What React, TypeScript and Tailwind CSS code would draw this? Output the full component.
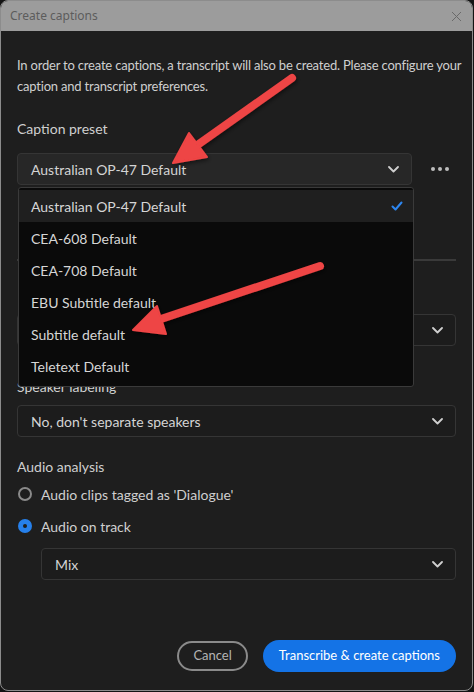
import * as React from "react";

const font = { fontFamily: "Lato, 'Noto Sans', sans-serif" };

function Chevron() {
	return (
		<svg width="11" height="7" viewBox="0 0 11 7" fill="none" className="shrink-0">
			<path d="M1 1l4.5 4.5L10 1" stroke="#cfcfcf" strokeWidth="1.8" strokeLinecap="round" strokeLinejoin="round" />
		</svg>
	);
}

function Select({ value, className = "" }: { value: string; className?: string }) {
	return (
		<div
			className={`flex items-center justify-between h-[32px] pl-[13px] pr-[12px] rounded-[4px] border border-[#353535] bg-[#1c1c1c] text-[14px] text-[#d4d4d4] ${className}`}
		>
			<span>{value}</span>
			<Chevron />
		</div>
	);
}

const presets = [
	"Australian OP-47 Default",
	"CEA-608 Default",
	"CEA-708 Default",
	"EBU Subtitle default",
	"Subtitle default",
	"Teletext Default",
];

function Arrows() {
	return (
		<svg className="absolute inset-0 z-20 pointer-events-none" width="474" height="692" viewBox="0 0 474 692">
			<defs>
				<filter id="sh" x="-20%" y="-20%" width="140%" height="140%">
					<feDropShadow dx="1" dy="2" stdDeviation="2" floodColor="#000" floodOpacity="0.5" />
				</filter>
			</defs>
			<g filter="url(#sh)" fill="#ee4444" stroke="#ee4444">
				<line x1="292" y1="78" x2="196" y2="146" strokeWidth="8" strokeLinecap="round" />
				<polygon points="173,163 189,133 207,157" strokeWidth="2" strokeLinejoin="round" />
				<line x1="320" y1="266" x2="158" y2="320" strokeWidth="8" strokeLinecap="round" />
				<polygon points="133,330 157,306 166,334" strokeWidth="2" strokeLinejoin="round" />
			</g>
		</svg>
	);
}

export default function App() {
	return (
		<div className="relative w-[474px] h-[692px] bg-[#141414] overflow-hidden" style={font}>
			<div className="flex flex-col w-[473px] h-[691px] rounded-[8px] overflow-hidden border border-[#8c8c8c] bg-[#1e1e1e]">
				<div className="flex items-center justify-between h-[30px] shrink-0 bg-[#9c9c9c] pl-[9px] pr-[10px]">
					<span className="text-[12px] text-[#5c5c5c]" style={{ fontFamily: "'Noto Sans', sans-serif" }}>
						Create captions
					</span>
					<svg width="11" height="11" viewBox="0 0 11 11">
						<path d="M1 1l9 9M10 1l-9 9" stroke="#6a6a6a" strokeWidth="1" />
					</svg>
				</div>

				<div className="flex flex-col flex-1 px-4 pt-[24px] text-[#cfcfcf]">
					<p className="text-[13px] leading-[21px] tracking-[-0.2px] whitespace-nowrap">
						In order to create captions, a transcript will also be created. Please configure your
						<br />
						caption and transcript preferences.
					</p>

					<div className="mt-[22px] text-[14px] leading-[20px]">Caption preset</div>

					<div className="relative flex items-center mt-[14px]">
						<Select value="Australian OP-47 Default" className="flex-1 bg-[#272727] border-[#3b3b3b]" />
						<div className="flex items-center justify-center w-[32px] ml-[12px] gap-[3px]">
							<span className="w-[4px] h-[4px] rounded-full bg-[#bdbdbd]" />
							<span className="w-[4px] h-[4px] rounded-full bg-[#bdbdbd]" />
							<span className="w-[4px] h-[4px] rounded-full bg-[#bdbdbd]" />
						</div>

						<div className="absolute left-[1px] top-[34px] w-[396px] z-10 pt-[2px] pb-[4px] rounded-[3px] border border-[#3a3a3a] bg-[#0a0a0a]">
							{presets.map((p, i) => (
								<div
									key={p}
									className={`flex items-center justify-between h-[32px] pl-[12px] pr-[10px] text-[14px] text-[#d6d6d6] ${
										i === 0 ? "bg-[#1f1f1f]" : ""
									}`}
								>
									<span>{p}</span>
									{i === 0 && (
										<svg width="12" height="10" viewBox="0 0 12 10" fill="none">
											<path d="M1.5 5.5l3 3L10.5 1.5" stroke="#2d86f0" strokeWidth="2" strokeLinecap="round" strokeLinejoin="round" />
										</svg>
									)}
								</div>
							))}
						</div>
					</div>

					{/* section hidden under the open menu */}
					<div className="h-[74px]" />
					<div className="border-t-2 border-[#3a3a3a]" />
					<div className="h-[20px] mt-[18px]" />
					<Select value="" className="mt-[15px]" />
					<div className="mt-[31px] text-[14px] leading-[20px]">Speaker labeling</div>
					<Select value="No, don't separate speakers" className="mt-[8px]" />

					<div className="mt-[20px] text-[14px] leading-[20px]">Audio analysis</div>
					<div className="flex items-center gap-[9px] mt-[7px] h-[20px] pl-[1px]">
						<span className="w-[14px] h-[14px] rounded-full border-2 border-[#8a8a8a]" />
						<span className="text-[14px]">Audio clips tagged as 'Dialogue'</span>
					</div>
					<div className="flex items-center gap-[9px] mt-[12px] h-[20px] pl-[1px]">
						<span className="flex items-center justify-center w-[14px] h-[14px] rounded-full bg-[#2680eb]">
							<span className="w-[4px] h-[4px] rounded-full bg-[#1e1e1e]" />
						</span>
						<span className="text-[14px]">Audio on track</span>
					</div>
					<Select value="Mix" className="ml-[24px] mt-[12px]" />

					<div className="flex justify-end items-center gap-[15px] mt-auto mb-[18px]">
						<button className="h-[30px] px-[14px] rounded-full border-2 border-[#8a8a8a] text-[13px] text-[#b4b4b4]">
							Cancel
						</button>
						<button className="h-[32px] px-[16px] rounded-full bg-[#1473e6] text-[13px] text-white">
							Transcribe &amp; create captions
						</button>
					</div>
				</div>
			</div>
			<Arrows />
		</div>
	);
}
